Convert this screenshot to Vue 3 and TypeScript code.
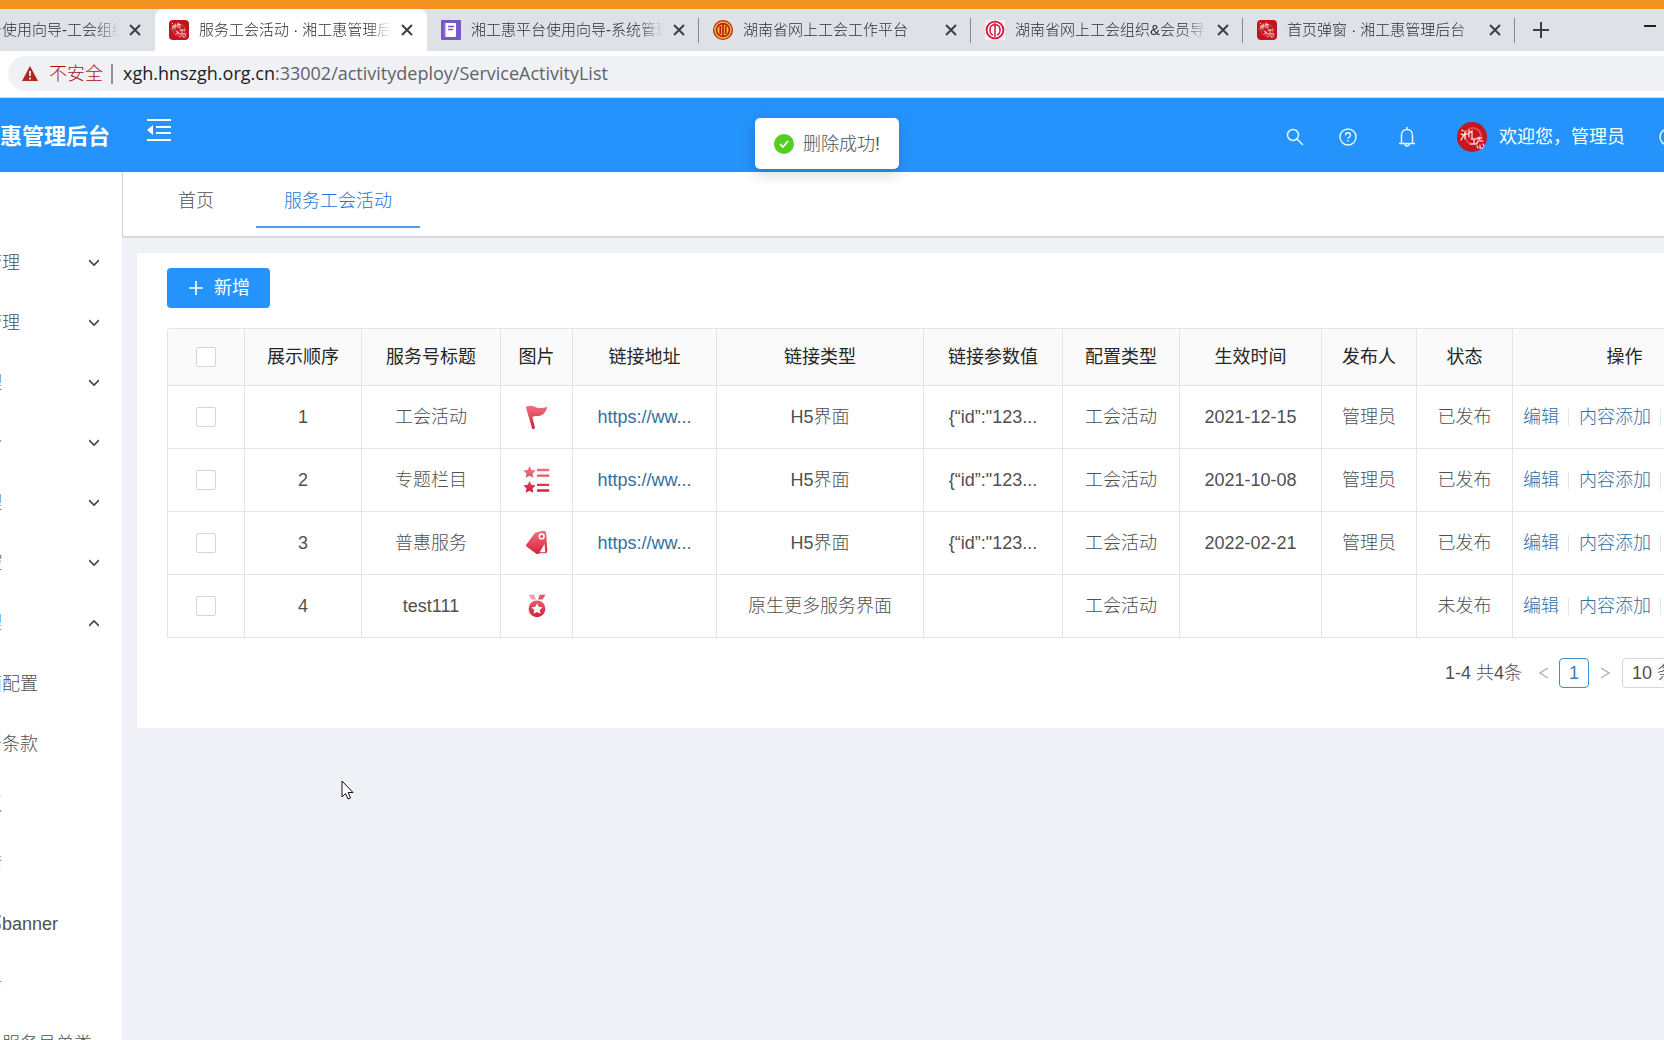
<script setup lang="ts">
import { ref } from 'vue'

type TabIcon = 'xgh' | 'doc' | 'union' | 'member'

interface BrowserTab {
  title: string
  icon: TabIcon
  active?: boolean
}

interface MenuItem {
  label: string
  open?: boolean
}

interface Row {
  order: number
  title: string
  icon: 'flag' | 'list' | 'tag' | 'medal'
  url: string
  linkType: string
  params: string
  configType: string
  date: string
  publisher: string
  status: string
}

const tabs: BrowserTab[] = [
  { title: '湘工惠平台使用向导-工会组织', icon: 'doc' },
  { title: '服务工会活动 · 湘工惠管理后台', icon: 'xgh', active: true },
  { title: '湘工惠平台使用向导-系统管理', icon: 'doc' },
  { title: '湖南省网上工会工作平台', icon: 'union' },
  { title: '湖南省网上工会组织&会员导入', icon: 'member' },
  { title: '首页弹窗 · 湘工惠管理后台', icon: 'xgh' },
]

const menu: MenuItem[] = [
  { label: '管理' },
  { label: '管理' },
  { label: '理' },
  { label: '分' },
  { label: '理' },
  { label: '控' },
  { label: '理', open: true },
]

const submenu: string[] = ['面配置', '务条款', '议', '请', '部banner', '卡', '一服务号单类']

const columns: string[] = [
  '展示顺序', '服务号标题', '图片', '链接地址', '链接类型', '链接参数值',
  '配置类型', '生效时间', '发布人', '状态', '操作',
]

const rows: Row[] = [
  { order: 1, title: '工会活动', icon: 'flag', url: 'https://ww...', linkType: 'H5界面', params: '{“id”:"123...', configType: '工会活动', date: '2021-12-15', publisher: '管理员', status: '已发布' },
  { order: 2, title: '专题栏目', icon: 'list', url: 'https://ww...', linkType: 'H5界面', params: '{“id”:"123...', configType: '工会活动', date: '2021-10-08', publisher: '管理员', status: '已发布' },
  { order: 3, title: '普惠服务', icon: 'tag', url: 'https://ww...', linkType: 'H5界面', params: '{“id”:"123...', configType: '工会活动', date: '2022-02-21', publisher: '管理员', status: '已发布' },
  { order: 4, title: 'test111', icon: 'medal', url: '', linkType: '原生更多服务界面', params: '', configType: '工会活动', date: '', publisher: '', status: '未发布' },
]

const selected = ref<number[]>([])
const pageSize = ref('10')

function toggleAll(event: Event): void {
  const checked = (event.target as HTMLInputElement).checked
  selected.value = checked ? rows.map((row) => row.order) : []
}
</script>

<template>
  <div class="screen">
    <div class="desktop-edge"></div>

    <div class="tab-strip">
      <div class="tabs">
        <div v-for="(tab, i) in tabs" :key="i" class="tab" :class="{ active: tab.active, plain: i < 1 }">
          <svg v-if="tab.icon === 'xgh'" class="favicon" viewBox="0 0 20 20" aria-hidden="true">
            <rect width="20" height="20" rx="4" fill="#c3161c" />
            <circle cx="10" cy="10" r="6" fill="none" stroke="#d9555a" />
            <path d="M3 3l1 1M3 6l1 1M3 9l2-3M6 4v5M5 6h3M9 3v5M9 5l2-1v4M11 10h5M13 10v3M10 14h7M12 16l-1 1M14 16v1h2M16 15l1 1M7 11l2 1-2 2M9 14l1-2" fill="none" stroke="#fff" stroke-width="0.8" stroke-linecap="round" />
          </svg>
          <svg v-else-if="tab.icon === 'doc'" class="favicon" viewBox="0 0 20 20" aria-hidden="true">
            <rect width="20" height="20" rx="1" fill="#7658c6" />
            <rect x="4" y="3" width="11" height="14" rx="1" fill="#fff" />
            <path d="M4.500 3v14" stroke="#c9bdec" stroke-width="1.500" />
            <path d="M7 6.500h6M7 9.500h5" stroke="#7658c6" stroke-width="1.300" />
          </svg>
          <svg v-else-if="tab.icon === 'union'" class="favicon" viewBox="0 0 20 20" aria-hidden="true">
            <circle cx="10" cy="10" r="10" fill="#b8240f" />
            <circle cx="10" cy="10" r="8" fill="none" stroke="#f3bc3a" stroke-width="1.400" />
            <circle cx="10" cy="10" r="5.600" fill="#f3bc3a" />
            <path d="M10 4v12M7.300 6v8M12.700 6v8" stroke="#b8240f" stroke-width="1.700" />
          </svg>
          <svg v-else class="favicon" viewBox="0 0 20 20" aria-hidden="true">
            <rect width="20" height="20" fill="#fbeef0" />
            <circle cx="10" cy="10" r="8.400" fill="#fff" stroke="#d4143c" stroke-width="1.800" />
            <path d="M10 3v14M8 5c-4 1-4 9 0 10M12 5c4 1 4 9 0 10M7 5h6" fill="none" stroke="#d4143c" stroke-width="1.500" />
          </svg>
          <span class="tab-title">{{ tab.title }}</span>
          <button class="tab-close" type="button" aria-label="关闭标签页">
            <svg width="12" height="12" viewBox="0 0 12 12"><path d="M1 1l10 10M11 1L1 11" stroke="#3c4043" stroke-width="2" /></svg>
          </button>
        </div>
        <button class="tab-new" type="button" aria-label="新标签页">
          <svg width="16" height="16" viewBox="0 0 16 16"><path d="M8 0v16M0 8h16" stroke="#3c4043" stroke-width="2" /></svg>
        </button>
      </div>
      <button class="minimize" type="button" aria-label="最小化"></button>
    </div>

    <div class="toolbar">
      <div class="omnibox">
        <svg width="16" height="15" viewBox="0 0 16 15" aria-hidden="true">
          <path d="M8 0l8 15H0z" fill="#b3261e" /><path d="M8 5v5M8 11.500v2" stroke="#fff" stroke-width="1.600" />
        </svg>
        <span class="insecure">不安全</span>
        <span class="url"><b>xgh.hnszgh.org.cn</b>:33002/activitydeploy/ServiceActivityList</span>
      </div>
    </div>

    <header class="app-header">
      <h1 class="brand">惠管理后台</h1>
      <button class="fold" type="button" aria-label="收起菜单">
        <svg width="26" height="24" viewBox="0 0 26 24" fill="none" stroke="#fff" stroke-width="2">
          <path d="M1 2h24M10 9h15M10 15h15M1 22h24" /><path d="M7 7v10L1 12z" fill="#fff" stroke="none" />
        </svg>
      </button>
      <div class="header-actions">
        <button type="button" class="icon-btn" aria-label="搜索">
          <svg width="18" height="18" viewBox="0 0 18 18" fill="none" stroke="#e8f6ff" stroke-width="1.500"><circle cx="7" cy="7" r="5.500" /><path d="M11 11l6 6" /></svg>
        </button>
        <button type="button" class="icon-btn" aria-label="帮助">
          <svg width="18" height="18" viewBox="0 0 18 18" fill="none" stroke="#e8f6ff" stroke-width="1.400"><circle cx="9" cy="9" r="8" /><path d="M6.500 7.200c0-3.200 5-3.200 5 0 0 1.800-2.500 1.800-2.500 3.600M9 12v1.500" /></svg>
        </button>
        <button type="button" class="icon-btn bell" aria-label="通知">
          <svg width="18" height="20" viewBox="0 0 18 20" fill="none" stroke="#e8f6ff" stroke-width="1.500"><path d="M9 0v2M1 16.500h16M3.500 16.500V8c0-7.500 11-7.500 11 0v8.500M7 17c0 2.500 4 2.500 4 0" /></svg>
        </button>
        <div class="user">
          <svg width="30" height="30" viewBox="0 0 30 30" aria-hidden="true">
            <circle cx="15" cy="15" r="15" fill="#c8161d" />
            <circle cx="16" cy="14" r="8" fill="none" stroke="#dd4a50" stroke-width="2" />
            <path d="M5 8l1 1M4 12l2 1M4 18l3-5M8 9v8M7 12h4M12 8v7M12 11l3-2v7M14 17h6M17 17v5M13 22h7M22 15v3M20 16h5M21 19l-1 2M23 19h3M20 24l1 2M23 23v3h3M26 22l1 2" fill="none" stroke="#fff" stroke-width="1.100" stroke-linecap="round" />
          </svg>
          <span>欢迎您，管理员</span>
        </div>
        <svg class="logout" width="18" height="18" viewBox="0 0 18 18" fill="none" stroke="#e8f6ff" stroke-width="1.500" aria-hidden="true"><circle cx="9" cy="9" r="8" /></svg>
      </div>
      <div class="toast" role="status">
        <svg width="20" height="20" viewBox="0 0 20 20" aria-hidden="true"><circle cx="10" cy="10" r="10" fill="#54cf20" /><path d="M6 10l3 3 5-6" fill="none" stroke="#fff" stroke-width="1.600" /></svg>
        <span>删除成功!</span>
      </div>
    </header>

    <div class="body">
      <nav class="sidebar">
        <div class="menu">
          <a v-for="(item, i) in menu" :key="i" href="#" class="menu-item" :class="{ open: item.open }">
            <span>{{ item.label }}</span>
            <svg width="10" height="8" viewBox="0 0 10 8" fill="none" stroke="#444" stroke-width="1.600">
              <path :d="item.open ? 'M0 7l5-5 5 5' : 'M0 1l5 5 5-5'" />
            </svg>
          </a>
        </div>
        <a v-for="(label, i) in submenu" :key="i" href="#" class="menu-item">{{ label }}</a>
      </nav>

      <main class="main">
        <nav class="page-tabs">
          <a href="#" class="page-tab">首页</a>
          <a href="#" class="page-tab current">服务工会活动</a>
        </nav>

        <section class="card">
          <button type="button" class="add">
            <svg width="14" height="14" viewBox="0 0 14 14"><path d="M7 0v14M0 7h14" stroke="#fff" stroke-width="1.600" /></svg>
            <span>新增</span>
          </button>

          <table class="grid">
            <colgroup>
              <col class="c-check" /><col class="c-order" /><col class="c-title" /><col class="c-img" />
              <col class="c-url" /><col class="c-type" /><col class="c-title" /><col class="c-order" />
              <col class="c-date" /><col class="c-pub" /><col class="c-status" /><col class="c-ops" />
            </colgroup>
            <thead>
              <tr>
                <th><input type="checkbox" aria-label="全选" @change="toggleAll" /></th>
                <th v-for="name in columns" :key="name">{{ name }}</th>
              </tr>
            </thead>
            <tbody>
              <tr v-for="row in rows" :key="row.order">
                <td><input v-model="selected" type="checkbox" :value="row.order" :aria-label="'选择 ' + row.title" /></td>
                <td>{{ row.order }}</td>
                <td>{{ row.title }}</td>
                <td>
                  <svg class="pic" viewBox="0 0 30 30" aria-hidden="true">
                    <defs>
                      <linearGradient :id="'red' + row.order" x1="0" y1="0" x2="0" y2="30" gradientUnits="userSpaceOnUse">
                        <stop offset="0.100" stop-color="#f0707c" /><stop offset="0.900" stop-color="#d4203a" />
                      </linearGradient>
                    </defs>
                    <g :fill="'url(#red' + row.order + ')'">
                      <template v-if="row.icon === 'flag'">
                        <path d="M3 4c5-2 8-1 12 1 4 1 8 0 11-1-1 5-4 9-9 10-3 0-5 0-7 1l3 12-3 1z" />
                      </template>
                      <template v-else-if="row.icon === 'list'">
                        <path d="M7 0l2 4.200 4.600.600-3.400 3.200.9 4.700L7 10.500l-4.100 2.200.9-4.700L.4 4.800 5 4.200z" />
                        <path d="M7 16l2 4.200 4.600.600-3.400 3.200.9 4.700L7 26.500l-4.100 2.200.9-4.700-3.400-3.200 4.600-.6z" />
                        <path d="M15 3h13v2.500H15zM15 9h13v2.500H15zM15 19h13v2.500H15zM15 25h13v2.500H15z" />
                      </template>
                      <template v-else-if="row.icon === 'tag'">
                        <path d="M13 4l8-2c3 0 4 1 4 3l1 18c0 2-1 3-2 3h-6l-3 1L4 19c-1-1-1-2 0-3z" />
                        <circle cx="20" cy="8" r="2.600" fill="none" stroke="#fff" stroke-width="1.500" />
                        <path d="M23 16l1 9h-6z" fill="#fff" />
                      </template>
                      <template v-else>
                        <path d="M6 3h6l2 5h-5z" fill="#f0a0a6" /><path d="M18 3h6l-3 5h-5z" fill="#dc5a62" />
                        <circle cx="15" cy="18" r="9" />
                        <path d="M15 12l1.800 3.800 4.200.500-3.100 2.900.8 4.200-3.700-2.100-3.700 2.100.8-4.200L9 16.300l4.200-.5z" fill="#fff" />
                      </template>
                    </g>
                  </svg>
                </td>
                <td><a v-if="row.url" href="#">{{ row.url }}</a></td>
                <td>{{ row.linkType }}</td>
                <td>{{ row.params }}</td>
                <td>{{ row.configType }}</td>
                <td>{{ row.date }}</td>
                <td>{{ row.publisher }}</td>
                <td>{{ row.status }}</td>
                <td>
                  <div class="ops"><a href="#">编辑</a><a href="#">内容添加</a><a href="#">删除</a></div>
                </td>
              </tr>
            </tbody>
          </table>

          <div class="pager">
            <span class="total">1-4 共4条</span>
            <button type="button" class="arrow" aria-label="上一页">
              <svg width="10" height="12" viewBox="0 0 10 12"><path d="M9 1L1 6l8 5" fill="none" stroke="#b0b0b0" stroke-width="1.400" /></svg>
            </button>
            <button type="button" class="page-no">1</button>
            <button type="button" class="arrow" aria-label="下一页">
              <svg width="10" height="12" viewBox="0 0 10 12"><path d="M1 1l8 5-8 5" fill="none" stroke="#b0b0b0" stroke-width="1.400" /></svg>
            </button>
            <select v-model="pageSize" class="size" aria-label="每页条数">
              <option value="10">10 条/页</option>
              <option value="20">20 条/页</option>
            </select>
          </div>
        </section>
      </main>
    </div>

    <svg class="pointer" width="13" height="20" viewBox="0 0 13 20" aria-hidden="true">
      <path d="M1 1v16l3.500-3.500L7 19l2.500-1-2.300-5.500H12z" fill="#fff" stroke="#111" />
    </svg>
  </div>
</template>

<style>
body {
  margin: 0;
  overflow: hidden;
  background: #f0f1f7;
}
</style>

<style scoped>
.screen {
  position: relative;
  height: 100vh;
  overflow: hidden;
  display: flex;
  flex-direction: column;
  background: #f0f1f7;
  color: #505050;
  font: 300 18px/24px "Liberation Sans", "Noto Sans CJK SC", sans-serif;
}
.screen * {
  box-sizing: border-box;
}
button {
  border: 0;
  padding: 0;
  background: none;
  font: inherit;
  color: inherit;
}
a {
  color: inherit;
  text-decoration: none;
}
svg {
  display: block;
  flex: none;
}

.desktop-edge {
  flex: none;
  height: 9px;
  background: #f39120;
}

.tab-strip {
  flex: none;
  display: flex;
  justify-content: space-between;
  height: 42px;
  overflow: hidden;
  background: #dee1e6;
}
.tabs {
  display: flex;
  margin-left: -117px;
}
.tab {
  flex: none;
  display: flex;
  align-items: center;
  width: 272px;
  height: 42px;
  padding: 0 14px;
  color: #2c3033;
  font-size: 15px;
  position: relative;
}
.tab.active {
  background: #fff;
  border-radius: 8px 8px 0 0;
}
.tab:not(.active):not(.plain)::after {
  content: "";
  position: absolute;
  right: 0;
  top: 9px;
  height: 25px;
  border-right: 1px solid #85888c;
}
.favicon {
  width: 20px;
  height: 20px;
}
.tab-title {
  flex: 1;
  margin: 0 10px;
  overflow: hidden;
  white-space: nowrap;
  mask-image: linear-gradient(90deg, #000 88%, transparent);
}
.tab-close {
  width: 12px;
  height: 12px;
}
.tab-new {
  margin-left: 18px;
}
.minimize {
  width: 12px;
  height: 2px;
  margin: 16px 8px 0 0;
  background: #222;
}

.toolbar {
  flex: none;
  height: 47px;
  padding: 5px 0 0 8px;
  background: #fff;
  border-bottom: 1px solid #c3dcf3;
}
.omnibox {
  display: flex;
  align-items: center;
  height: 35px;
  padding-left: 14px;
  border-radius: 18px 0 0 18px;
  background: #f0f1f4;
  font-size: 18px;
}
.insecure {
  margin-left: 11px;
  padding-right: 8px;
  border-right: 2px solid #8d8f93;
  line-height: 20px;
  color: #a8101c;
}
.url {
  margin: 0 0 2px 10px;
  font-family: "Open Sans", sans-serif;
  font-weight: 400;
  color: #5f6368;
}
.url b {
  font-weight: 400;
  color: #202124;
}

.app-header {
  flex: none;
  position: relative;
  display: flex;
  align-items: center;
  height: 74px;
  padding-top: 3px;
  background: #2593fc;
  color: #fff;
}
.brand {
  margin: 0;
  font-size: 22px;
  line-height: 32px;
  font-weight: 700;
}
.fold {
  margin: 0 0 13px 36px;
}
.header-actions {
  display: flex;
  align-items: center;
  margin: 0 -13px 0 auto;
}
.icon-btn {
  margin-right: 35px;
}
.icon-btn.bell {
  margin: 0 41px 0 6px;
}
.user {
  display: flex;
  align-items: center;
  gap: 12px;
  margin-right: 34px;
  font-weight: 400;
}
.toast {
  position: absolute;
  top: 20px;
  left: 50%;
  transform: translateX(-50%);
  z-index: 2;
  margin-left: -5px;
  display: flex;
  align-items: center;
  gap: 9px;
  height: 51px;
  padding: 0 19px;
  border-radius: 5px;
  background: #fff;
  color: #505050;
  white-space: nowrap;
  box-shadow: 0 5px 14px rgba(0, 0, 0, 0.16);
}

.body {
  flex: 1;
  display: flex;
  min-height: 0;
}
.sidebar {
  flex: none;
  width: 138px;
  margin-left: -16px;
  padding-top: 60px;
  overflow: hidden;
  background: #fff;
}
.menu {
  padding: 1px 0;
}
.menu-item {
  display: flex;
  align-items: center;
  justify-content: space-between;
  height: 60px;
  padding-right: 23px;
  white-space: nowrap;
}
.menu-item.open span {
  color: #1f8bf0;
}

.main {
  flex: 1;
  min-width: 0;
}
.page-tabs {
  display: flex;
  height: 66px;
  padding-left: 11px;
  background: #fff;
  border-left: 1px solid #d0d0d6;
  border-bottom: 2px solid #d9dae0;
}
.page-tab {
  height: 56px;
  padding: 17px 42px 0 44px;
}
.page-tab.current {
  padding: 17px 28px 0;
  border-bottom: 2px solid #5b9be0;
  color: #1677dc;
}

.card {
  margin: 15px 0 0 15px;
  height: 475px;
  padding: 15px 0 0 30px;
  overflow: hidden;
  background: #fff;
}
.add {
  display: flex;
  align-items: center;
  gap: 11px;
  height: 40px;
  padding: 0 20px 0 22px;
  border-radius: 4px;
  background: #2593fc;
  color: #fff;
  font-weight: 400;
}

.grid {
  width: 1570px;
  margin-top: 20px;
  table-layout: fixed;
  border-collapse: separate;
  border-spacing: 0;
  border: 1px solid #e4e4e6;
  border-width: 1px 0 0 1px;
  border-radius: 4px 0 0 0;
  text-align: center;
}
.c-check { width: 77px; }
.c-order { width: 117px; }
.c-title { width: 139px; }
.c-img { width: 72px; }
.c-url { width: 144px; }
.c-type { width: 207px; }
.c-date { width: 142px; }
.c-pub { width: 95px; }
.c-status { width: 96px; }
.c-ops { width: 224px; }
.grid th,
.grid td {
  height: 63px;
  padding: 0;
  border: 1px solid #e4e4e6;
  border-width: 0 1px 1px 0;
}
.grid th {
  height: 57px;
  background: #fafafa;
  color: #262626;
  font-weight: 400;
}
.grid input {
  appearance: none;
  display: block;
  width: 20px;
  height: 20px;
  margin: 0 auto;
  border: 1px solid #d6d6d8;
  border-radius: 2px;
  background: #fff;
}
.grid input:checked {
  background: #2593fc;
}
.grid a {
  color: #336fa0;
}
.pic {
  width: 28px;
  height: 28px;
  margin: 0 auto;
}
.ops {
  display: flex;
  padding-left: 10px;
  white-space: nowrap;
}
.ops a + a {
  margin-left: 9px;
  padding-left: 11px;
  background: linear-gradient(#e4e4e6, #e4e4e6) 0 50% / 1px 17px no-repeat;
}

.pager {
  display: flex;
  align-items: center;
  width: 1570px;
  height: 30px;
  margin-top: 20px;
  padding-left: 1278px;
  white-space: nowrap;
}
.total {
  flex: none;
  width: 94px;
}
.arrow {
  flex: none;
  width: 10px;
}
.page-no {
  flex: none;
  width: 30px;
  height: 30px;
  margin: 0 11px 0 10px;
  border: 1px solid #3a8fd0;
  border-radius: 4px;
  color: #3a7fd0;
}
.size {
  appearance: none;
  flex: none;
  width: 114px;
  height: 30px;
  margin-left: 12px;
  padding: 0 9px;
  border: 1px solid #d6d6d8;
  border-radius: 4px;
  background: #fff;
  color: inherit;
  font: inherit;
}

.pointer {
  position: absolute;
  left: 341px;
  top: 780px;
}
</style>
